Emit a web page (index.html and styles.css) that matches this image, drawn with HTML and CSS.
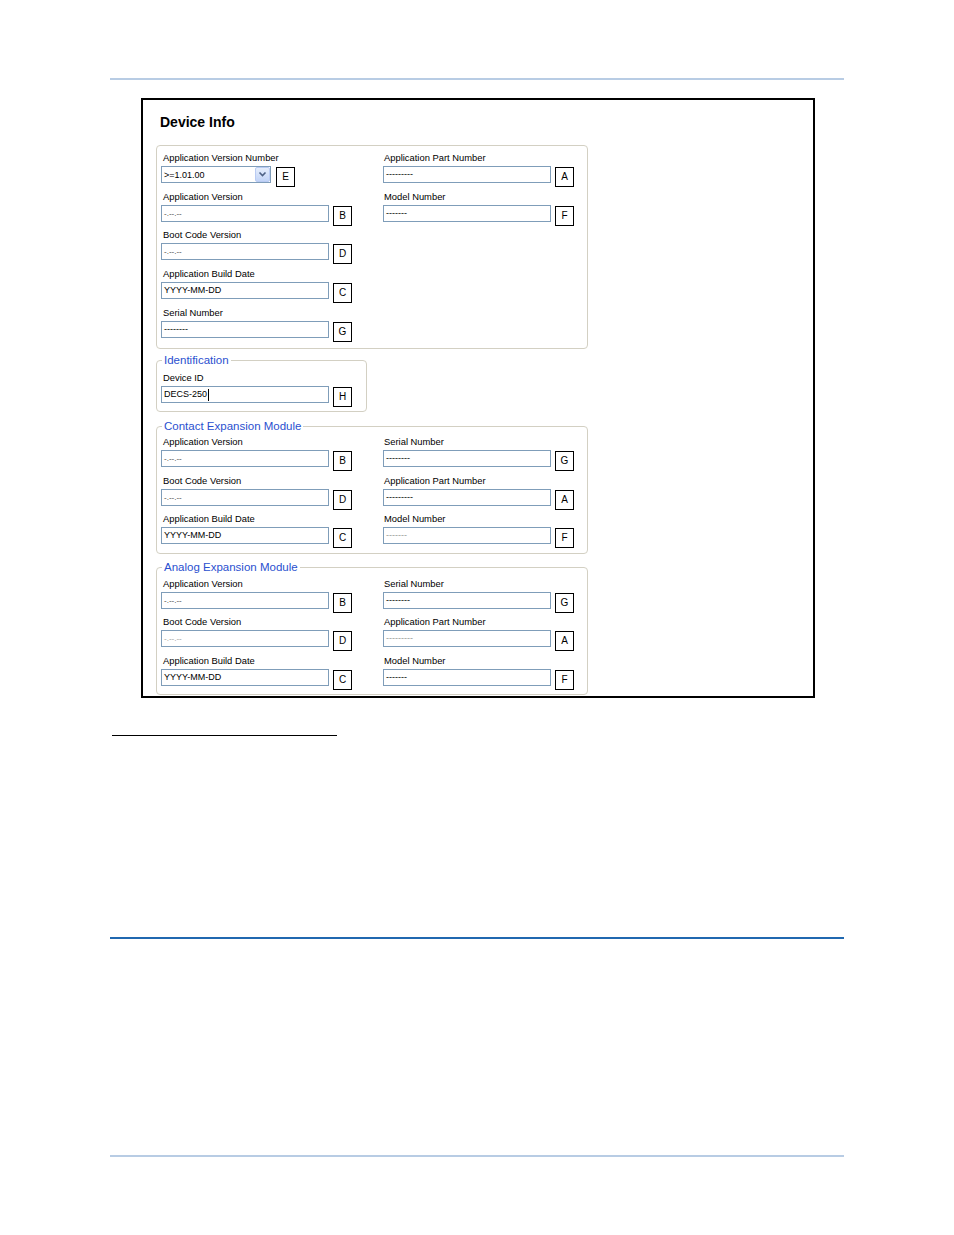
FILE: index.html
```html
<!DOCTYPE html>
<html>
<head>
<meta charset="utf-8">
<title>Device Info</title>
<link rel="stylesheet" href="styles.css">
</head>
<body>
<div class="page">
  <div class="rule-top"></div>
  <div class="frame">
    <div class="title">Device Info</div>

    <div class="group g-main">
      <div class="col col-left">
        <div class="row">
          <div class="label">Application Version Number</div>
          <div class="field">
            <div class="combo">
              <span class="combo-text">&gt;=1.01.00</span>
              <span class="combo-btn"><svg width="9" height="7" viewBox="0 0 9 7"><polyline points="1.5,1.5 4.5,4.5 7.5,1.5" fill="none" stroke="#4d6185" stroke-width="1.6"/></svg></span>
            </div>
            <div class="key">E</div>
          </div>
        </div>
        <div class="row">
          <div class="label">Application Version</div>
          <div class="field"><div class="tb dots">-.--.--</div><div class="key">B</div></div>
        </div>
        <div class="row">
          <div class="label">Boot Code Version</div>
          <div class="field"><div class="tb dots">-.--.--</div><div class="key">D</div></div>
        </div>
        <div class="row">
          <div class="label">Application Build Date</div>
          <div class="field"><div class="tb">YYYY-MM-DD</div><div class="key">C</div></div>
        </div>
        <div class="row">
          <div class="label">Serial Number</div>
          <div class="field"><div class="tb">--------</div><div class="key">G</div></div>
        </div>
      </div>
      <div class="col col-right">
        <div class="row">
          <div class="label">Application Part Number</div>
          <div class="field"><div class="tb">---------</div><div class="key">A</div></div>
        </div>
        <div class="row">
          <div class="label">Model Number</div>
          <div class="field"><div class="tb">-------</div><div class="key">F</div></div>
        </div>
      </div>
    </div>

    <fieldset class="group fs g-ident">
      <legend>Identification</legend>
      <div class="col col-left">
        <div class="row">
          <div class="label">Device ID</div>
          <div class="field"><div class="tb">DECS-250<span class="caret"></span></div><div class="key">H</div></div>
        </div>
      </div>
    </fieldset>

    <fieldset class="group fs g-mod">
      <legend>Contact Expansion Module</legend>
      <div class="cols">
        <div class="col col-left">
          <div class="row">
            <div class="label">Application Version</div>
            <div class="field"><div class="tb dots">-.--.--</div><div class="key">B</div></div>
          </div>
          <div class="row">
            <div class="label">Boot Code Version</div>
            <div class="field"><div class="tb dots">-.--.--</div><div class="key">D</div></div>
          </div>
          <div class="row">
            <div class="label">Application Build Date</div>
            <div class="field"><div class="tb">YYYY-MM-DD</div><div class="key">C</div></div>
          </div>
        </div>
        <div class="col col-right">
          <div class="row">
            <div class="label">Serial Number</div>
            <div class="field"><div class="tb">--------</div><div class="key">G</div></div>
          </div>
          <div class="row">
            <div class="label">Application Part Number</div>
            <div class="field"><div class="tb">---------</div><div class="key">A</div></div>
          </div>
          <div class="row">
            <div class="label">Model Number</div>
            <div class="field"><div class="tb dim">-------</div><div class="key">F</div></div>
          </div>
        </div>
      </div>
    </fieldset>

    <fieldset class="group fs g-mod">
      <legend>Analog Expansion Module</legend>
      <div class="cols">
        <div class="col col-left">
          <div class="row">
            <div class="label">Application Version</div>
            <div class="field"><div class="tb dots">-.--.--</div><div class="key">B</div></div>
          </div>
          <div class="row">
            <div class="label">Boot Code Version</div>
            <div class="field"><div class="tb dots dim">-.--.--</div><div class="key">D</div></div>
          </div>
          <div class="row">
            <div class="label">Application Build Date</div>
            <div class="field"><div class="tb">YYYY-MM-DD</div><div class="key">C</div></div>
          </div>
        </div>
        <div class="col col-right">
          <div class="row">
            <div class="label">Serial Number</div>
            <div class="field"><div class="tb">--------</div><div class="key">G</div></div>
          </div>
          <div class="row">
            <div class="label">Application Part Number</div>
            <div class="field"><div class="tb dim">---------</div><div class="key">A</div></div>
          </div>
          <div class="row">
            <div class="label">Model Number</div>
            <div class="field"><div class="tb">-------</div><div class="key">F</div></div>
          </div>
        </div>
      </div>
    </fieldset>
  </div>

  <div class="rule-short"></div>
  <div class="rule-blue"></div>
  <div class="rule-bottom"></div>
</div>
</body>
</html>
```

FILE: styles.css
```css
* { box-sizing: border-box; }

body {
  margin: 0;
  background: #fff;
  font-family: "Liberation Sans", Arial, sans-serif;
  color: #000;
}

.page {
  width: 954px;
  height: 1235px;
  padding-top: 78px;
  overflow: hidden;
}

.rule-top {
  margin-left: 110px;
  width: 734px;
  height: 2px;
  background: #b8cce4;
}

.frame {
  margin: 18px 0 0 141px;
  width: 674px;
  height: 600px;
  border: 2px solid #000;
  overflow: hidden;
  padding: 14px 0 0 13px;
}

.title {
  font-weight: bold;
  font-size: 14px;
  line-height: 16px;
  margin: 0 0 15px 4px;
}

.group {
  width: 432px;
  border: 1px solid #d3d0c3;
  border-radius: 4px;
}

.g-main {
  display: flex;
  padding: 5px 0 3.5px 4px;
}

.fs {
  margin: 7px 0 0 0;
  padding: 3.5px 0 1px 4px;
  min-width: 0;
}

.fs legend {
  padding: 0 2px;
  margin-left: 1px;
  font-size: 11.5px;
  line-height: 13px;
  color: #2a50cf;
}

.g-ident {
  width: 211px;
  margin-top: 5.5px;
  padding-top: 4px;
}

.g-mod {
  margin-top: 7.5px;
  padding-top: 2.5px;
  padding-bottom: 2px;
}

.g-mod .row {
  height: 38.5px;
}

.cols {
  display: flex;
}

.col-left {
  width: 222px;
}

.row {
  height: 38.7px;
}

.label {
  font-size: 9.4px;
  line-height: 13px;
  padding-left: 2px;
  margin-bottom: 2px;
  white-space: nowrap;
}

.col-right .label {
  padding-left: 1px;
}

.field {
  display: flex;
  align-items: flex-start;
  gap: 4px;
}

.tb {
  width: 168px;
  height: 17px;
  border: 1px solid #7f9db9;
  background: #fff;
  font-size: 9px;
  line-height: 15px;
  padding-left: 2px;
  white-space: nowrap;
  display: flex;
  align-items: center;
}

.tb.dots {
  color: #444;
  font-size: 8px;
}

.tb.dim {
  color: #9a9a9a;
}

.caret {
  display: inline-block;
  width: 1px;
  height: 12px;
  background: #000;
  margin-left: 1px;
}

.combo {
  width: 110px;
  height: 17px;
  border: 1px solid #7f9db9;
  display: flex;
  align-items: center;
  justify-content: space-between;
  padding-left: 2px;
  font-size: 9px;
}

.combo-btn {
  width: 15px;
  height: 15px;
  border: 1px solid #b9cbf3;
  border-radius: 2px;
  background: linear-gradient(#e6eefc, #c2d4f7);
  display: flex;
  align-items: center;
  justify-content: center;
}

.key {
  width: 19px;
  height: 20px;
  margin-top: 1px;
  border: 1px solid #000;
  background: #fff;
  font-size: 10px;
  line-height: 18px;
  text-align: center;
}

.g-main .col-left .row:first-child .field {
  gap: 5px;
}

.rule-short {
  margin: 37px 0 0 112px;
  width: 225px;
  height: 1px;
  background: #000;
}

.rule-blue {
  margin: 201px 0 0 110px;
  width: 734px;
  height: 2px;
  background: #2068b0;
}

.rule-bottom {
  margin: 216px 0 0 110px;
  width: 734px;
  height: 2px;
  background: #b8cce4;
}
```
